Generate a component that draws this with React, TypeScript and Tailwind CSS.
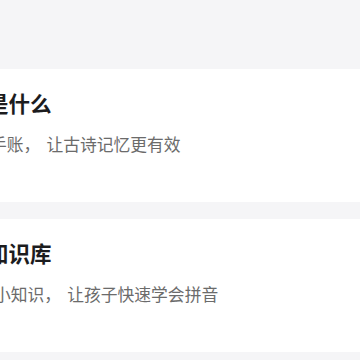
export default function App() {
  const cards = [
    {
      title: "是什么",
      lead: "手账",
      rest: "让古诗记忆更有效",
      descShift: "-ml-[10px]",
    },
    {
      title: "知识库",
      lead: "小知识",
      rest: "让孩子快速学会拼音",
      descShift: "-ml-[6px]",
    },
  ];

  return (
    <main
      className="w-[360px] h-[360px] overflow-hidden bg-[#f5f5f7] flex flex-col gap-[17px] pt-[69px]"
      style={{ fontFamily: '"Noto Sans CJK SC", "Noto Sans", sans-serif' }}
    >
      {cards.map((c) => (
        <section
          key={c.title}
          className="h-[133px] shrink-0 bg-white overflow-hidden flex flex-col pt-[18px]"
        >
          <h2 className="-ml-[13px] whitespace-nowrap text-[21.5px] leading-[32px] font-bold text-[#1c1c1e]">
            {c.title}
          </h2>
          <p
            className={`${c.descShift} mt-[13px] whitespace-nowrap text-[16.8px] leading-[24px] text-[#6b6b6b]`}
          >
            {c.lead}
            <span className="mr-[6px]">，</span>
            {c.rest}
          </p>
        </section>
      ))}
    </main>
  );
}
